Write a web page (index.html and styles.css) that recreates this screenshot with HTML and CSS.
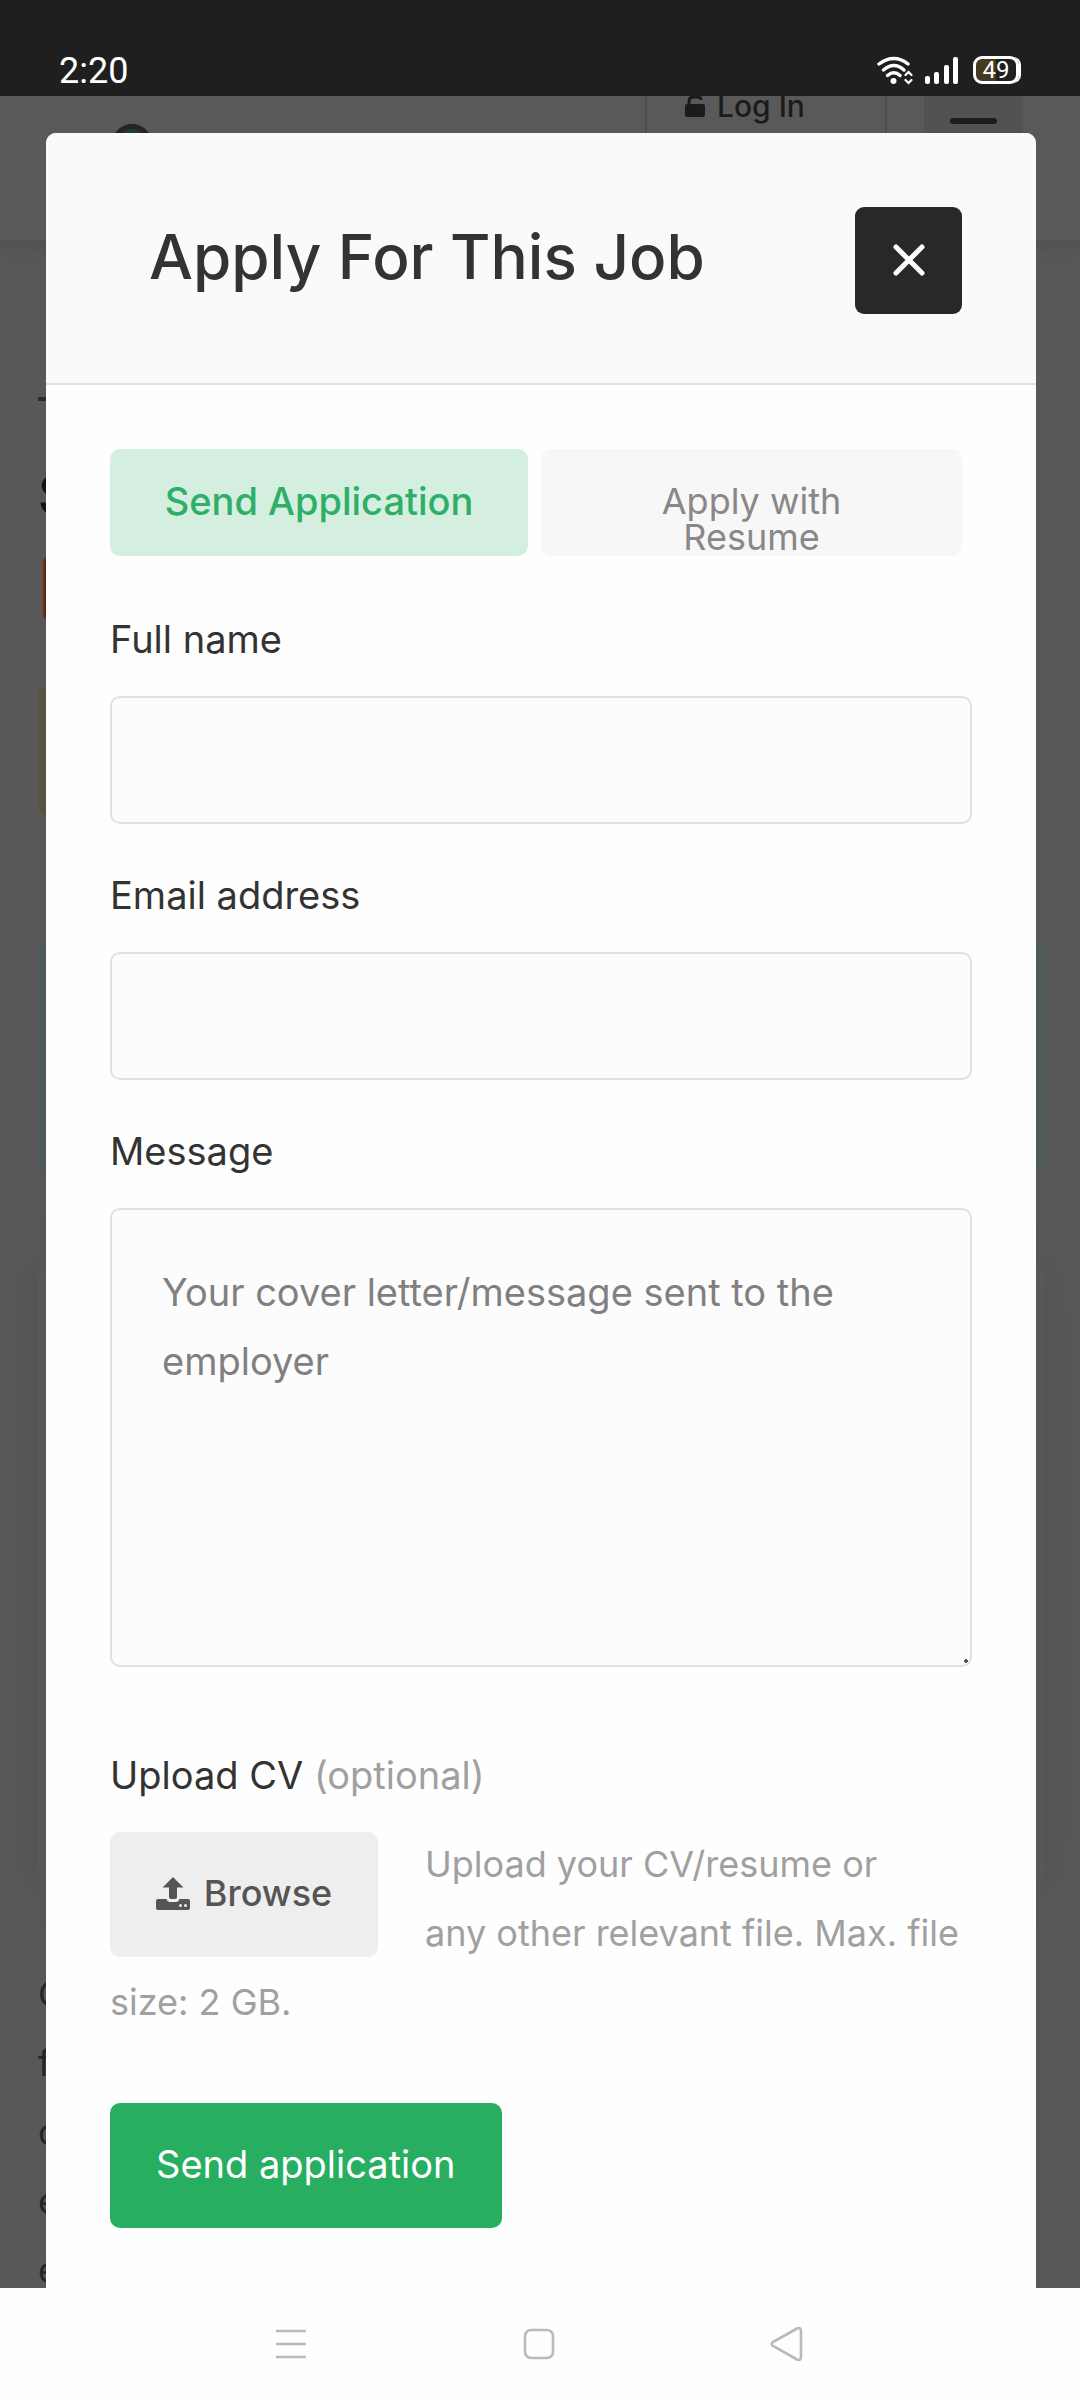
FILE: index.html
```html
<!DOCTYPE html>
<html lang="en">
<head>
<meta charset="utf-8">
<meta name="viewport" content="width=device-width, initial-scale=1">
<title>Apply For This Job</title>
<link rel="stylesheet" href="styles.css">
</head>
<body>
<div class="status">
  <span class="status-time">2:20</span>
  <div class="status-icons">
    <svg width="36" height="30" viewBox="0 0 36 30" fill="none" stroke="#fff" stroke-width="3.4" stroke-linecap="round">
      <path d="M2 8Q17 -3 31 8M6.500 14Q17 5 27 14M10.500 19.500Q17 14 23 19.500"/>
      <circle cx="16.500" cy="25" r="3" fill="#fff" stroke="none"/>
      <path d="M28.500 19L31.500 16L34.500 19M28.500 24L31.500 27L34.500 24" stroke-width="2.200"/>
    </svg>
    <svg width="34" height="30" viewBox="0 0 34 30" fill="#fff">
      <rect x="0" y="20" width="5" height="8" rx="2"/><rect x="9" y="16" width="5" height="12" rx="2"/><rect x="19" y="9" width="5" height="19" rx="2"/><rect x="28" y="1" width="5" height="27" rx="2"/>
    </svg>
    <span class="battery">49</span>
  </div>
</div>

<main class="stage">
  <div class="backdrop" aria-hidden="true">
    <div class="site-head">
      <span class="site-logo"></span>
      <div class="login">
        <svg width="20" height="24" viewBox="0 0 20 24"><path d="M4 11V5Q4 1 9 1H13Q16 1 16 4" fill="none" stroke="#1b1b1b" stroke-width="3"/><rect y="8" width="20" height="13" rx="2" fill="#1b1b1b"/></svg>
        <span>Log In</span>
      </div>
      <div class="site-menu"><span></span></div>
    </div>
    <div class="job">
      <span class="dash"></span>
      <span class="job-title">S</span>
      <span class="job-tag"></span>
      <span class="job-alert"></span>
      <span class="job-band"></span>
      <span class="job-card"></span>
      <span class="job-text">C<br>f<br>c<br>e<br>e</span>
    </div>
  </div>

  <section class="modal" role="dialog" aria-labelledby="dialog-title">
    <header class="modal-head">
      <h1 class="modal-title" id="dialog-title">Apply For This Job</h1>
      <button class="close" type="button" aria-label="Close">
        <svg width="34" height="34" viewBox="0 0 34 34" stroke="#fff" stroke-width="5" stroke-linecap="round"><path d="M4 4L30 30M30 4L4 30"/></svg>
      </button>
    </header>
    <form class="form">
      <div class="tabs">
        <button class="tab tab-active" type="button">Send Application</button>
        <button class="tab" type="button">Apply with Resume</button>
      </div>
      <label class="label" for="name">Full name</label>
      <input class="field" id="name" type="text">
      <label class="label" for="email">Email address</label>
      <input class="field" id="email" type="email">
      <label class="label" for="message">Message</label>
      <textarea class="field message" id="message" placeholder="Your cover letter/message sent to the employer"></textarea>
      <label class="label label-upload" for="browse">Upload CV <span class="muted">(optional)</span></label>
      <div class="upload">
        <button class="browse" id="browse" type="button">
          <svg width="34" height="34" viewBox="0 0 34 34"><path d="M17 1L27.500 11.500H21V21Q21 23 19 23H15Q13 23 13 21V11.500H6.500Z" fill="#555"/><path d="M2 23H10.500Q11.500 26 14 26H20Q22.500 26 23.500 23H32Q34 23 34 25V32Q34 34 32 34H2Q0 34 0 32V25Q0 23 2 23Z" fill="#555"/><circle cx="24.500" cy="29.500" r="1.500" fill="#eee"/><circle cx="29.500" cy="29.500" r="1.500" fill="#eee"/></svg>
          <span>Browse</span>
        </button>
        <p class="muted help">Upload your CV/resume or<br>any other relevant file. Max. file size: 2 GB.</p>
      </div>
      <button class="submit" type="submit">Send application</button>
    </form>
  </section>
</main>

<nav class="navbar" aria-label="System">
  <button class="nav-btn" type="button" aria-label="Recent apps"><svg width="36" height="36" viewBox="0 0 36 36" stroke="#bababa" stroke-width="2.600"><path d="M3 5H33M3 18H33M3 31H33"/></svg></button>
  <button class="nav-btn" type="button" aria-label="Home"><svg width="36" height="36" viewBox="0 0 36 36" fill="none" stroke="#bababa" stroke-width="2.600"><rect x="4" y="4" width="28" height="28" rx="6"/></svg></button>
  <button class="nav-btn" type="button" aria-label="Back"><svg width="36" height="36" viewBox="0 0 36 36" fill="none" stroke="#bababa" stroke-width="2.600"><path d="M4 16L28 2.500Q32 1 32 5V31Q32 35 28 33.500L4 20Q1 18 4 16Z"/></svg></button>
</nav>
</body>
</html>
```
FILE: styles.css
```css
* { box-sizing: border-box; }

body {
  margin: 0;
  min-height: 100vh;
  display: flex;
  flex-direction: column;
  background: #585858;
  color: #333;
  font-family: Inter, "Open Sans", sans-serif;
  font-size: 38px;
}

button, input, textarea { font: inherit; color: inherit; }
button { border: 0; padding: 0; background: none; }
svg { display: block; flex: none; }

/* Status bar */
.status {
  height: 96px;
  padding: 46px 61px 0 59px;
  display: flex;
  align-items: flex-start;
  justify-content: space-between;
  background: #1f1f1f;
  color: #fff;
  font-family: Roboto, sans-serif;
}
.status-time { font-size: 36px; line-height: 50px; }
.status-icons { display: flex; gap: 12px; padding-top: 10px; }
.battery {
  width: 46px;
  height: 28px;
  margin-left: 2px;
  border: 3px solid #fff;
  border-radius: 9px;
  box-shadow: 3px 0 0 -1px #fff;
  background: linear-gradient(90deg, #443a20 50%, #1f1f1f 50%);
  font-size: 24px;
  line-height: 22px;
  text-align: center;
}

/* Dimmed page under the dialog */
.stage { position: relative; flex: 1; }
.backdrop { position: absolute; inset: 0; overflow: hidden; font-size: 36px; }
.site-head {
  height: 144px;
  padding: 0 57px 0 112px;
  display: flex;
  align-items: flex-start;
  background: #595959;
  box-shadow: 0 6px 24px #4f4f4f;
}
.site-logo {
  width: 40px;
  height: 40px;
  margin: 28px auto 0 0;
  border: 5px solid #22242a;
  border-radius: 50%;
  background: #1b3f28;
}
.login {
  width: 242px;
  height: 60px;
  margin-right: 37px;
  padding-left: 38px;
  display: flex;
  gap: 12px;
  border: solid #4c4c4c;
  border-width: 0 2px;
  color: #1b1b1b;
  font-size: 30px;
  font-weight: 500;
  line-height: 20px;
}
.site-menu { width: 99px; height: 60px; padding: 22px 26px; background: #525252; }
.site-menu span { display: block; height: 6px; border-radius: 3px; background: #1d1d1d; }
.job { display: flex; flex-direction: column; padding: 157px 36px 0 38px; }
.dash { width: 40px; height: 4px; background: #2b2b2b; }
.job-title { margin-top: 58px; font-size: 56px; font-weight: 600; line-height: 72px; color: #141414; }
.job-tag { width: 200px; height: 67px; margin: 24px 0 0 5px; border-radius: 8px; border: 2px solid #6e2f0d; background: #552408; }
.job-alert { height: 130px; margin: 64px 20px 0 0; border-radius: 10px; background: #58543f; }
.job-band { height: 233px; margin-top: 126px; background: #50595b; }
.job-card { height: 617px; margin-top: 90px; border-radius: 10px; background: #585858; box-shadow: 0 0 40px #525252; }
.job-text { margin-top: 78px; line-height: 69px; color: #262626; }

/* Dialog */
.modal {
  position: relative;
  min-height: 2155px;
  margin: 37px 44px 0 46px;
  border-radius: 10px 10px 0 0;
  background: #fefefe;
}
.modal-head {
  height: 252px;
  padding: 4px 74px 0 103px;
  display: flex;
  align-items: center;
  justify-content: space-between;
  border-bottom: 2px solid #e0e0e0;
  border-radius: 10px 10px 0 0;
  background: #fafafa;
}
.modal-title { margin: 0 0 6px; font-size: 62px; font-weight: 500; line-height: 72px; }
.close {
  width: 107px;
  height: 107px;
  display: grid;
  place-items: center;
  border-radius: 9px;
  background: #282828;
}
.form { display: flex; flex-direction: column; padding: 64px 64px 60px; }
.tabs { display: grid; grid-template-columns: 418px 1fr; gap: 13px; margin-right: 10px; }
.tab {
  height: 107px;
  padding: 32px 50px 0;
  display: block;
  border-radius: 10px;
  background: #f7f7f7;
  color: #888;
  font-size: 36px;
  line-height: 36px;
}
.tab-active { padding: 0 0 3px; background: #d4efdf; color: #2eae66; font-size: 38px; font-weight: 500; }
.label { margin: 48px 0 22px; line-height: 70px; }
.field + .label { margin-top: 36px; }
.field {
  width: 100%;
  height: 128px;
  padding: 0 50px;
  border: 2px solid #e0e0e0;
  border-radius: 10px;
  background: #fcfcfc;
  outline: 0;
}
.message { height: 459px; padding: 48px 50px; line-height: 69px; resize: vertical; }
.message::placeholder { color: #808080; opacity: 1; }
.message::-webkit-resizer { background: radial-gradient(circle at 11px 11px, #555 2px, transparent 2px); }
.field + .label-upload { margin: 73px 0 20px; }
.muted { color: #a0a0a0; }
.help { margin: 0; font-size: 36px; line-height: 69px; }
.browse {
  float: left;
  width: 268px;
  height: 125px;
  margin: 2px 47px 0 0;
  padding-bottom: 4px;
  display: flex;
  align-items: center;
  justify-content: center;
  gap: 14px;
  border-radius: 10px;
  background: #eee;
  color: #555;
  font-size: 36px;
  font-weight: 500;
}
.submit {
  align-self: flex-start;
  height: 125px;
  margin-top: 66px;
  padding: 0 46px 4px;
  border-radius: 10px;
  background: #27ae60;
  color: #fff;
}

/* System navigation */
.navbar {
  height: 112px;
  padding: 0 275px 0 273px;
  display: flex;
  align-items: center;
  justify-content: space-between;
  background: #fefefe;
}
```
